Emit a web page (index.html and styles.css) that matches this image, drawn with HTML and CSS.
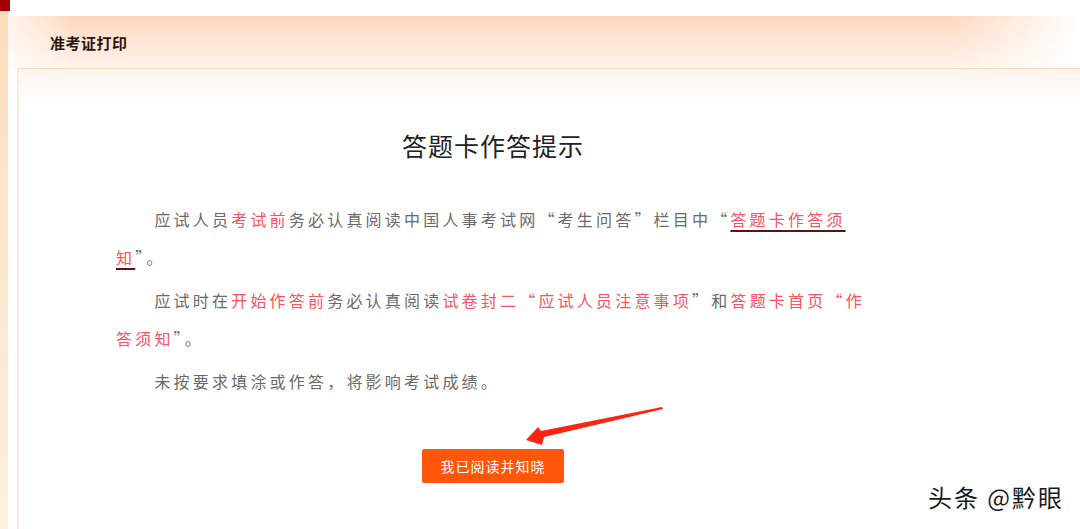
FILE: index.html
```html
<!DOCTYPE html>
<html lang="zh-CN">

<head>
    <meta charset="UTF-8">
    <meta name="viewport" content="width=device-width, initial-scale=1.0">
    <title>准考证打印</title>
    <link rel="stylesheet" href="styles.css">
</head>

<body>
    <div class="page">
        <div class="side-strip"></div>

        <div class="main">
            <div class="top-gap"></div>
            <div class="header">
                <h2>准考证打印</h2>
            </div>

            <div class="content">
                <div class="notice">
                    <h1>答题卡作答提示</h1>

                    <p>应试人员<span class="red">考试前</span>务必认真阅读中国人事考试网“考生问答”栏目中“<span class="red link">答题卡作答须</span><span class="red link">知</span>”。</p>
                    <p>应试时在<span class="red">开始作答前</span>务必认真阅读<span class="red">试卷封二“应试人员注意事项</span>”和<span class="red">答题卡首页“作</span><span class="red">答须知</span>”。</p>
                    <p>未按要求填涂或作答，将影响考试成绩。</p>

                    <div class="button">
                        <button>我已阅读并知晓</button>
                    </div>
                </div>
            </div>
        </div>
    </div>

    <!-- red arrow pointing at the button -->
    <svg class="arrow" width="1080" height="529" viewBox="0 0 1080 529">
        <polygon points="526,440 538,427 541,431 662,407 663,409 544,437 542,445" fill="#ff2412" />
    </svg>

    <div class="watermark">头条 @黔眼</div>
</body>

</html>
```

FILE: styles.css
```css
* {
    box-sizing: border-box;
}

html,
body {
    margin: 0;
    height: 529px;
    overflow: hidden;
    background: #fff;
}

body {
    position: relative;
    font-family: "Noto Sans CJK SC", "Noto Sans", sans-serif;
}

.page {
    display: flex;
    height: 100%;
}

.side-strip {
    position: relative;
    width: 8px;
    flex-shrink: 0;
    background: linear-gradient(to bottom, #fddcbb, #fef0e0);
}

.side-strip::before {
    content: "";
    position: absolute;
    left: 0;
    top: 0;
    width: 10px;
    height: 11px;
    background: #a40000;
}

.main {
    flex: 1;
    display: flex;
    flex-direction: column;
}

.top-gap {
    height: 16px;
}

.header {
    height: 52px;
    padding-left: 42px;
    display: flex;
    align-items: center;
    background:
        linear-gradient(to right, rgba(255, 255, 255, 0.7), rgba(255, 255, 255, 0) 6%, rgba(255, 255, 255, 0) 88%, #fff),
        linear-gradient(to bottom, #fdd8bd, #fff3eb);
}

.header h2 {
    margin: 0;
    font-size: 15px;
    font-weight: bold;
    letter-spacing: 0.5px;
    color: #2b1510;
}

.content {
    flex: 1;
    margin-left: 9px;
    border-top: 1px solid #f8d9c0;
    border-left: 2px solid #fbe7dc;
    background: linear-gradient(to bottom, #fff5ee, #fff 34px);
}

.notice {
    width: 754px;
    margin-left: 97px;
    padding-top: 60px;
}

.notice h1 {
    margin: 0 0 39px;
    text-align: center;
    font-size: 25px;
    line-height: 32px;
    font-weight: normal;
    letter-spacing: 1px;
    color: #222;
}

.notice p {
    margin: 0 0 5px;
    font-size: 16px;
    line-height: 38px;
    letter-spacing: 3.2px;
    text-indent: 38.4px;
    color: #6a6a6a;
}

.red {
    color: #f8535f;
}

.link {
    text-decoration: underline;
    text-decoration-color: #5a1414;
    text-decoration-thickness: 2px;
    text-underline-offset: 4px;
}

.button {
    margin-top: 49px;
    text-align: center;
}

.button button {
    width: 142px;
    height: 34px;
    border: none;
    border-radius: 2px;
    background: #ff560a;
    color: #fff;
    font-family: "Noto Sans CJK SC", sans-serif;
    font-size: 14px;
    letter-spacing: 1px;
}

.arrow {
    position: absolute;
    left: 0;
    top: 0;
    pointer-events: none;
}

.watermark {
    position: absolute;
    right: 16px;
    bottom: 17px;
    font-size: 24px;
    line-height: 30px;
    color: #1a1a1a;
    text-shadow: 1px 1px 0 #fff, -1px 0 0 #fff;
    letter-spacing: 2px;
}
```
